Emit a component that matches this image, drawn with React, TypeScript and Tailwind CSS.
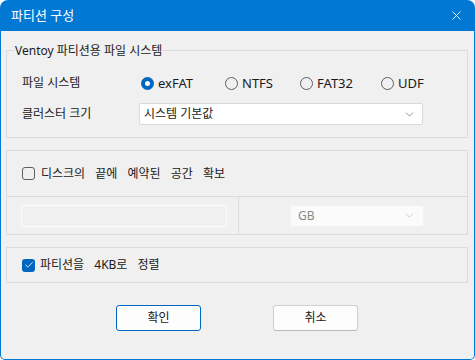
import { X, ChevronDown, Check } from "lucide-react"

const FONT = "font-['Noto_Sans','Noto_Sans_CJK_KR',sans-serif]"

function Radio({ label, checked, width }: { label: string; checked?: boolean; width: string }) {
  return (
    <div className={`flex items-center gap-[4px] ${width}`}>
      {checked ? (
        <span className="w-[13px] h-[13px] rounded-full bg-[#0067c0] flex items-center justify-center">
          <span className="w-[5px] h-[5px] rounded-full bg-white" />
        </span>
      ) : (
        <span className="w-[13px] h-[13px] rounded-full border border-[#5f5f5f]" />
      )}
      <span className="text-[13px] leading-none text-[#1a1a1a]">{label}</span>
    </div>
  )
}

export default function App() {
  return (
    <div className={`w-[475px] h-[360px] bg-[#0078d4] rounded-t-[8px] rounded-b-[5px] px-px pb-px flex flex-col ${FONT}`}>
      <div className="h-[31px] flex items-center justify-between pl-[10px] pr-[10px] text-white">
        <span className="text-[13px]">파티션 구성</span>
        <X size={15} strokeWidth={1.4} />
      </div>

      <div className="flex-1 bg-[#f0f0f0] rounded-b-[4px] pl-[5px] pr-[6px] pt-[11px] flex flex-col text-[#1a1a1a]">
        <fieldset className="border border-[#dcdcdc] px-[15px] pt-[13px] pb-[12px] m-0 min-w-0">
          <legend className="-ml-[8px] px-[1px] text-[12px] leading-[17px]">Ventoy 파티션용 파일 시스템</legend>
          <div className="flex items-center h-[22px]">
            <span className="w-[119px] text-[12px]">파일 시스템</span>
            <Radio label="exFAT" checked width="w-[84px]" />
            <Radio label="NTFS" width="w-[75px]" />
            <Radio label="FAT32" width="w-[81px]" />
            <Radio label="UDF" width="w-[50px]" />
          </div>
          <div className="flex items-center h-[22px] mt-[9px]">
            <span className="w-[117px] text-[12px]">클러스터 크기</span>
            <div className="w-[284px] h-[22px] bg-white border border-[#d9d9d9] rounded-[2px] flex items-center justify-between pl-[4px] pr-[6px]">
              <span className="text-[12px]">시스템 기본값</span>
              <ChevronDown size={13} strokeWidth={1.2} className="text-[#555]" />
            </div>
          </div>
        </fieldset>

        <div className="mt-[12px] border border-[#dcdcdc] flex flex-col">
          <div className="h-[45px] flex items-center pl-[15px]">
            <span className="w-[13px] h-[13px] rounded-[3px] border border-[#5f5f5f]" />
            <span className="ml-[6px] text-[12px] [word-spacing:7px]">디스크의 끝에 예약된 공간 확보</span>
          </div>
          <div className="h-[38px] border-t border-[#dcdcdc] flex">
            <div className="w-[232px] border-r border-[#dcdcdc] flex items-center pl-[14px]">
              <div className="w-[206px] h-[22px] border border-[#fbfbfb]" />
            </div>
            <div className="flex-1 flex items-center pl-[51px]">
              <div className="w-[134px] h-[22px] bg-[#fbfbfb] border border-[#f3f3f3] rounded-[2px] flex items-center justify-between pl-[7px] pr-[7px]">
                <span className="text-[12px] text-[#8a8a8a]">GB</span>
                <ChevronDown size={13} strokeWidth={1.2} className="text-[#b5b5b5]" />
              </div>
            </div>
          </div>
        </div>

        <div className="mt-[12px] h-[36px] border border-[#dcdcdc] flex items-center pl-[15px]">
          <span className="w-[13px] h-[13px] rounded-[3px] bg-[#0067c0] flex items-center justify-center">
            <Check size={10} strokeWidth={2} className="text-white" />
          </span>
          <span className="ml-[5px] text-[12px] [word-spacing:7px]">파티션을 4KB로 정렬</span>
        </div>

        <div className="mt-[22px] flex justify-center gap-[72px]">
          <button className="w-[85px] h-[26px] bg-[#fdfdfd] border border-[#0067c0] rounded-[3px] text-[12px]">확인</button>
          <button className="w-[85px] h-[26px] bg-[#fdfdfd] border border-[#d0d0d0] border-b-[#b8b8b8] rounded-[3px] text-[12px]">취소</button>
        </div>
      </div>
    </div>
  )
}
